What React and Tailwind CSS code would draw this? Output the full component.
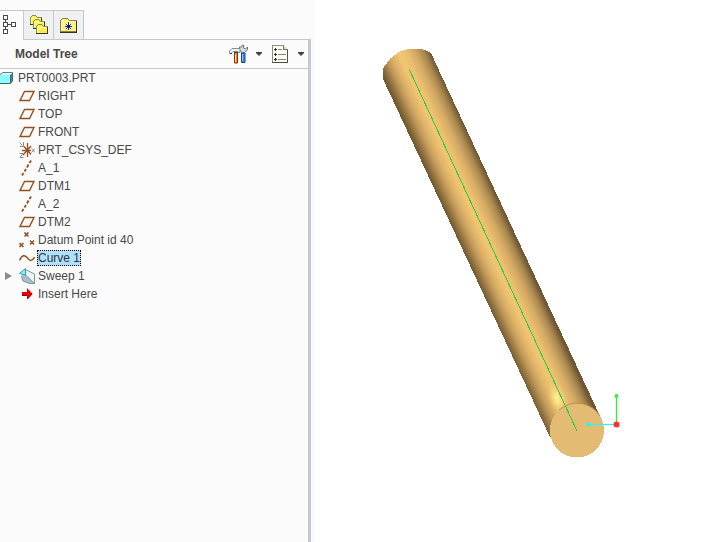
import React from "react";

const BROWN = "#96501f";

function TreeTabIcon() {
  return (
    <svg width="15" height="22" viewBox="0 0 15 22" shapeRendering="crispEdges" fill="none" stroke="#4a4a4a" aria-hidden="true">
      <path d="M1.5 1.5h4v4h-4zM1.5 8.5h4v4h-4zM1.5 15.5h4v4h-4zM9.5 8.5h4v4h-4zM3.5 6v2M3.5 13v2M6 10.5h3" />
    </svg>
  );
}

function Folder({ x, y }) {
  return (
    <g transform={`translate(${x} ${y})`}>
      <path d="M0.5 9.5V2.5L2.5 0.5h3l2 2h4v7z" fill="#fff04a" stroke="#8a8a4a" />
      <path d="M1.5 9V3.5H11" fill="none" stroke="#fffcc0" />
      <path d="M4 7.5h5M6 5.5h4" stroke="#ffd83a" strokeDasharray="1 1" />
      <path d="M0 9.5h11.5V3" fill="none" stroke="#38361c" />
    </g>
  );
}

function FoldersIcon() {
  return (
    <svg width="18" height="20" viewBox="0 0 18 20" shapeRendering="crispEdges" aria-hidden="true">
      <Folder x={0} y={0} />
      <Folder x={3} y={4} />
      <Folder x={6} y={9} />
    </svg>
  );
}

function FavoriteFolderIcon() {
  return (
    <svg width="18" height="16" viewBox="0 0 18 16" shapeRendering="crispEdges" aria-hidden="true">
      <path d="M0.5 14.5V3.5l2-2h5l2 2h7v11z" fill="#fff37a" stroke="#85804a" />
      <path d="M1.5 14V4.5H16" fill="none" stroke="#fffcc4" />
      <path d="M0 15h17M16.5 4v11" stroke="#37351f" />
      <path d="M8.5 5v8M5 9.500h7" stroke="#1428c8" />
      <path d="M6 7l5 5M11 7l-5 5" stroke="#1428c8" />
      <path d="M8 8h2v2h-2z" fill="#00105e" />
    </svg>
  );
}

function ToolsIcon() {
  return (
    <svg width="19" height="20" viewBox="0 0 19 20" aria-hidden="true">
      <path d="M5.500 8h3v11h-3z" fill="#e08a2a" stroke="#8e300f" />
      <path d="M6.500 10v8" stroke="#ffe694" />
      <path d="M12.500 9h3.500v9.500h-3.500z" fill="#3a85ec" stroke="#1c448a" />
      <path d="M13.500 10v7" stroke="#8cc2ff" />
      <path d="M10.500 3v2.500l2 3h3.500l2.500-3V3L16.500 5l-2-1L15 1.500 13.500 1 12.500 3z" fill="#d5dada" stroke="#5d6769" strokeWidth="0.900" />
      <path d="M0.500 9.500V7L3 4.500h8v4H9V7.500H4L2 9.500z" fill="#eef2f2" stroke="#75898b" strokeWidth="0.900" />
      <path d="M1 9.500h2M5 8.500h4" stroke="#2f4345" />
    </svg>
  );
}

function SettingsIcon() {
  return (
    <svg width="17" height="19" viewBox="0 0 17 19" shapeRendering="crispEdges" fill="none" aria-hidden="true">
      <path d="M0.5 0.5h11l4 4v13H0.5z" fill="#fbfcf2" stroke="#8b8e86" />
      <path d="M11.5 0.5v4h4" fill="#d9dcd5" stroke="#777a72" />
      <path d="M0 17.5h16M15.5 5v13" stroke="#4e504b" />
      <path d="M3 3h1v1h1v1H4v1H3V5H2V4h1zM3 8h1v1h1v1H4v1H3v-1H2V9h1zM3 13h1v1h1v1H4v1H3v-1H2v-1h1z" fill="#333" />
      <path d="M6 4.500h4M6 9.500h8M6 14.500h8" stroke="#85887e" />
    </svg>
  );
}

function DropArrow() {
  return (
    <svg width="6" height="4" viewBox="0 0 6 4" aria-hidden="true">
      <path d="M0 0h6v1L3 4 0 1z" fill="#444" />
    </svg>
  );
}

const icons = {
  part: (
    <g>
      <path d="M0 2.500L3 0.500h10v8.500l-3 2.500H0z" fill="#d5ffff" />
      <path d="M0 2.500L3 0.500h9.500" fill="none" stroke="#5b8586" />
      <path d="M0 3h10v8H0z" fill="#8dfafc" />
      <path d="M10 3l2.500-2v8L10 11.500z" fill="#4f8889" />
      <path d="M0 11.500h10.500V3M10.500 11.500L12.500 9V0.500" fill="none" stroke="#3f6c6d" />
    </g>
  ),
  plane: <path d="M1 12.500h9.500L15 3.500H5.500z" fill="none" stroke={BROWN} strokeWidth="1.400" />,
  csys: (
    <g fill="none">
      <path d="M8.500 1v14M3 8.500h9M5 4.500l7 8M12 4l-8 9" stroke={BROWN} strokeWidth="1.300" />
      <path d="M0.500 0.500l3 3M4.500 0v4.500H1M0.500 11.500h3.500L1 15.500h3.500M12.500 6.500l3.500 4M16 6.500l-3.500 4" stroke="#8a8a8a" />
    </g>
  ),
  axis: <path d="M12 0.500L10.500 3M9.500 4.500L8 7.500M7 9L5.500 11.500M4.500 13L3 15.500" stroke={BROWN} strokeWidth="1.800" />,
  points: (
    <path d="M5.500 0.500l4 4M9.500 0.500l-4 4M0.500 11l4 4M4.500 11l-4 4M11 8.500l4 4M15 8.500l-4 4" stroke={BROWN} strokeWidth="1.600" />
  ),
  curve: <path d="M0.500 10.500C3 5 5.500 4.500 8 7.500S12.500 12.500 15.500 7" fill="none" stroke={BROWN} strokeWidth="1.500" />,
  sweep: (
    <g>
      <path d="M6.500 1.500l9 4v9.500h-5L2 8z" fill="#edf4f5" />
      <path d="M2.500 7.500l3.500-1 9 9h-5L4 13z" fill="#a9c2c8" />
      <path d="M6.500 1.500l9 4.500v9.500M6 6.500l9.500 9M2.500 8L4 13l6.500 2.500h5" fill="none" stroke="#76898d" strokeWidth="0.900" />
      <path d="M0.500 5.500l6-5v6.500z" fill="#8af0f3" stroke="#28a5ac" />
    </g>
  ),
  insert: (
    <g>
      <path d="M3 6h5V2l5.500 5.800L8 13.500V10H3z" fill="#e60000" />
      <path d="M3 9.500h5M8.500 13l4.500-5" stroke="#860000" />
    </g>
  ),
};

function ItemIcon({ kind }) {
  return (
    <svg className="shrink-0" width="16" height="16" viewBox="0 0 16 16" aria-hidden="true">
      {icons[kind]}
    </svg>
  );
}

const items = [
  ["plane", "RIGHT"],
  ["plane", "TOP"],
  ["plane", "FRONT"],
  ["csys", "PRT_CSYS_DEF"],
  ["axis", "A_1"],
  ["plane", "DTM1"],
  ["axis", "A_2"],
  ["plane", "DTM2"],
  ["points", "Datum Point id 40"],
  ["curve", "Curve 1"],
  ["sweep", "Sweep 1"],
  ["insert", "Insert Here"],
];

function TreeItem({ kind, label }) {
  const selected = label === "Curve 1";
  return (
    <li role="treeitem" aria-selected={selected} className="flex h-[18px] items-center">
      <span className="flex w-[19px] shrink-0 items-center pl-[5px]">
        {kind === "sweep" && (
          <button type="button" aria-label="Expand Sweep 1">
            <svg width="7" height="8" viewBox="0 0 7 8" aria-hidden="true">
              <path d="M0 0l7 4-7 4z" fill="#8b8b8b" />
            </svg>
          </button>
        )}
      </span>
      <ItemIcon kind={kind} />
      <span
        className={
          selected
            ? "ml-[2px] h-4 border border-dotted border-black bg-[#aee1ff] leading-[14px] text-[#333]"
            : "ml-[3px] leading-4"
        }
      >
        {label}
      </span>
    </li>
  );
}

function ModelView() {
  return (
    <svg className="block" width="406" height="542" viewBox="315 0 406 542" role="img" aria-label="Swept cylinder">
      <defs>
        <linearGradient id="body" gradientUnits="userSpaceOnUse" x1="431" y1="180" x2="479" y2="158">
          <stop offset="0" stopColor="#735a33" />
          <stop offset="0.080" stopColor="#92733f" />
          <stop offset="0.200" stopColor="#c39a5a" />
          <stop offset="0.320" stopColor="#e0b469" />
          <stop offset="0.450" stopColor="#f2c573" />
          <stop offset="0.580" stopColor="#ecbf70" />
          <stop offset="0.740" stopColor="#d3a963" />
          <stop offset="0.880" stopColor="#a98850" />
          <stop offset="1" stopColor="#705733" />
        </linearGradient>
        <radialGradient id="glow">
          <stop offset="0" stopColor="#fff59b" />
          <stop offset="0.300" stopColor="#ffe68b" stopOpacity="0.850" />
          <stop offset="1" stopColor="#f4c875" stopOpacity="0" />
        </radialGradient>
      </defs>
      <path
        d="M383 71Q383 67 387 63Q390 58 395 55Q399 51 405 50Q412 48 420 49Q429 50 432 55L436 64L600 416L577 431L550 437L383 79Z"
        fill="url(#body)"
        shapeRendering="crispEdges"
      />
      <ellipse cx="557" cy="398" rx="9" ry="17" fill="url(#glow)" transform="rotate(-15 557 398)" />
      <circle cx="577" cy="430.500" r="27" fill="#e3bb72" shapeRendering="crispEdges" />
      <path d="M559 410A27 27 0 0 1 600 416" fill="none" stroke="#b88f50" />
      <path d="M409.500 70L577 431" stroke="#26cf43" shapeRendering="crispEdges" />
      <path d="M616.500 396v29" stroke="#35ee35" strokeWidth="1.300" />
      <path d="M588 424.500h28" stroke="#2af4f7" strokeWidth="1.300" />
      <circle cx="616.500" cy="396" r="2" fill="#3bea3b" />
      <circle cx="588" cy="424.500" r="2" fill="#2af4f7" />
      <circle cx="616.500" cy="424.500" r="3" fill="#ff3030" />
    </svg>
  );
}

export default function App() {
  return (
    <div className="flex min-h-screen bg-white font-['Liberation_Sans',Arial,sans-serif] text-xs text-[#484848]">
      <aside className="flex w-[315px] shrink-0 flex-col bg-[#fbfbfb] pt-[10px] pr-1">
        <div role="tablist" className="flex h-[29px]">
          <button type="button" role="tab" aria-selected="true" aria-label="Model tree" className="w-6 border-t border-r border-[#c5c9cd] pl-[2px]">
            <TreeTabIcon />
          </button>
          <button type="button" role="tab" aria-selected="false" aria-label="Folder browser" className="flex w-[30px] items-center justify-center border-t border-r border-[#c5c9cd] bg-[#eff0f2]">
            <FoldersIcon />
          </button>
          <button type="button" role="tab" aria-selected="false" aria-label="Favorites" className="flex w-[30px] items-center justify-center border-t border-r border-[#c5c9cd] bg-[#eff0f2]">
            <FavoriteFolderIcon />
          </button>
        </div>
        <section className="flex flex-1 flex-col border-r-[3px] border-[#c5c9cd]">
          <div className="flex">
            <span className="w-[23px]" />
            <span className="h-px flex-1 bg-[#c5c9cd]" />
          </div>
          <header className="flex h-[29px] items-center border-b border-[#c5c9cd] pr-1 pl-[15px]">
            <h1 className="flex-1 font-bold">Model Tree</h1>
            <button type="button" aria-label="Tools" className="flex items-center gap-2">
              <ToolsIcon />
              <DropArrow />
            </button>
            <button type="button" aria-label="Settings" className="ml-[10px] flex items-center gap-[9px]">
              <SettingsIcon />
              <DropArrow />
            </button>
          </header>
          <ul role="tree">
            <li role="treeitem" aria-expanded="true">
              <div className="flex h-[18px] items-center gap-[2px]">
                <svg width="16" height="12" viewBox="0 0 16 12" aria-hidden="true">
                  {icons.part}
                </svg>
                <span className="leading-4">PRT0003.PRT</span>
              </div>
              <ul role="group">
                {items.map(([kind, label]) => (
                  <TreeItem key={label} kind={kind} label={label} />
                ))}
              </ul>
            </li>
          </ul>
        </section>
      </aside>
      <main className="min-w-0 flex-1 overflow-hidden">
        <ModelView />
      </main>
    </div>
  );
}
